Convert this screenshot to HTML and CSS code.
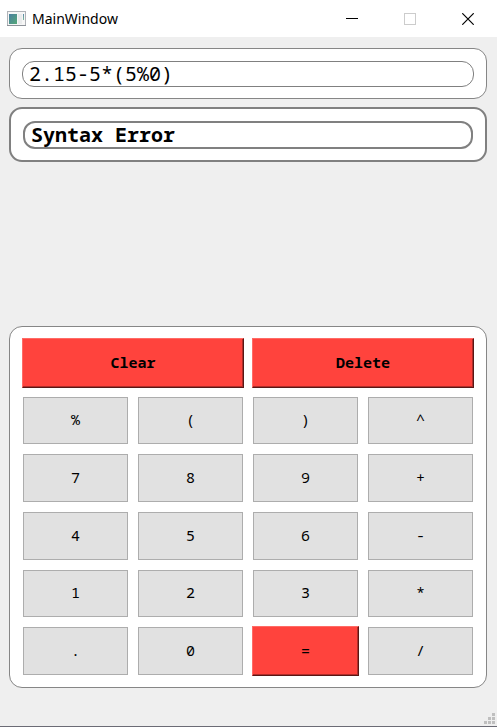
FILE: index.html
```html
<!DOCTYPE html>
<html lang="en">
<head>
<meta charset="utf-8">
<meta name="viewport" content="width=device-width, initial-scale=1">
<title>MainWindow</title>
<link rel="stylesheet" href="styles.css">
</head>
<body>
<header class="titlebar">
  <svg class="app-icon" width="19" height="16" viewBox="0 0 19 16" aria-hidden="true">
    <defs>
      <linearGradient id="pane" x1="0" y1="0" x2="1" y2="1">
        <stop offset="0" stop-color="#4a7fa0"/><stop offset="1" stop-color="#55a878"/>
      </linearGradient>
      <linearGradient id="strip" x1="0" y1="0" x2="0" y2="1">
        <stop offset="0" stop-color="#5b86a8"/><stop offset="1" stop-color="#7dbb98"/>
      </linearGradient>
    </defs>
    <rect x="0.5" y="0.5" width="18" height="14" fill="#f6f6f6" stroke="#b0b3b8"/>
    <path d="M0 14.5H19" stroke="#8d9299"/>
    <rect x="2" y="3" width="8" height="10" fill="url(#pane)"/>
    <rect x="11" y="3" width="4" height="10" fill="#e9ebec"/>
    <rect x="16" y="3" width="1" height="6" fill="url(#strip)"/>
  </svg>
  <h1 class="title">MainWindow</h1>
  <button class="window-button" type="button" aria-label="Minimize">
    <svg width="12" height="12" viewBox="0 0 12 12"><path d="M0 5.5H12" stroke="#000"/></svg>
  </button>
  <button class="window-button" type="button" aria-label="Maximize" disabled>
    <svg width="12" height="12" viewBox="0 0 12 12"><rect x="0.5" y="0.5" width="11" height="11" fill="none" stroke="#ccc"/></svg>
  </button>
  <button class="window-button" type="button" aria-label="Close">
    <svg width="12" height="12" viewBox="0 0 12 12"><path d="M0.3 0.3L11.7 11.7M11.7 0.3L0.3 11.7" stroke="#000" stroke-width="1.2"/></svg>
  </button>
</header>
<main class="calculator">
  <section class="panel">
    <input class="field" type="text" aria-label="Expression" value="2.15-5*(5%0)">
  </section>
  <section class="panel panel-result">
    <input class="field field-result" type="text" aria-label="Result" value="Syntax Error" readonly>
  </section>
  <section class="keypad" aria-label="Keypad">
    <button class="key key-red key-wide" type="button">Clear</button>
    <button class="key key-red key-wide" type="button">Delete</button>
    <button class="key" type="button">%</button>
    <button class="key" type="button">(</button>
    <button class="key" type="button">)</button>
    <button class="key" type="button">^</button>
    <button class="key" type="button">7</button>
    <button class="key" type="button">8</button>
    <button class="key" type="button">9</button>
    <button class="key" type="button">+</button>
    <button class="key" type="button">4</button>
    <button class="key" type="button">5</button>
    <button class="key" type="button">6</button>
    <button class="key" type="button">-</button>
    <button class="key" type="button">1</button>
    <button class="key" type="button">2</button>
    <button class="key" type="button">3</button>
    <button class="key" type="button">*</button>
    <button class="key" type="button">.</button>
    <button class="key" type="button">0</button>
    <button class="key key-red" type="button">=</button>
    <button class="key" type="button">/</button>
  </section>
</main>
<footer class="statusbar">
  <svg width="11" height="11" viewBox="0 0 11 11" fill="#bfbfbf" aria-hidden="true">
    <path d="M8 0h3v3h-3zM4 4h3v3h-3zM8 4h3v3h-3zM0 8h3v3h-3zM4 8h3v3h-3zM8 8h3v3h-3z"/>
  </svg>
</footer>
</body>
</html>
```
FILE: styles.css
```css
* {
  box-sizing: border-box;
}

body {
  margin: 0;
  min-height: 100vh;
  display: flex;
  flex-direction: column;
  background: #efefef;
  border-bottom: 1px solid #6b6b75;
  color: #000;
  font-family: "Noto Sans Mono", "DejaVu Sans Mono", monospace;
}

.titlebar {
  display: flex;
  align-items: center;
  height: 37px;
  padding-left: 7px;
  background: #fff;
}

.title {
  flex: 1;
  margin: 0 0 0 6px;
  font: 400 14px/20px "Noto Sans", sans-serif;
}

.window-button {
  display: flex;
  align-items: center;
  justify-content: center;
  width: 58px;
  height: 36px;
  padding: 0;
  border: 0;
  background: transparent;
}

.calculator {
  flex: 1;
  display: flex;
  flex-direction: column;
  gap: 8px;
  padding: 11px 10px 0 9px;
}

.panel {
  display: flex;
  padding: 12px 12px 11px;
  border: 1px solid #868686;
  border-radius: 13px;
  background: #fff;
}

.panel-result {
  border-width: 2px;
  border-color: #808080;
}

.field {
  width: 100%;
  height: 26px;
  padding: 0 7px 2px 6px;
  border: 1px solid #808080;
  border-radius: 12px;
  outline: 0;
  background: #fff;
  color: #000;
  font-family: inherit;
  font-size: 20px;
}

.field-result {
  height: 28px;
  border-width: 2px;
  font-weight: 700;
}

.keypad {
  display: grid;
  grid-template-columns: repeat(4, 1fr);
  grid-auto-rows: 1fr;
  gap: 8px;
  min-height: 362px;
  margin-top: auto;
  padding: 11px 12px;
  border: 1px solid #868686;
  border-radius: 13px;
  background: #fff;
}

.key {
  margin: 1px;
  padding: 0 0 2px;
  border: 1px solid #adadad;
  background: #e1e1e1;
  color: #000;
  font-family: inherit;
  font-size: 15px;
}

.key-red {
  margin: 0;
  border-color: #ff6b66 #5a1715 #5a1715 #ff6b66;
  background: #ff433d;
  box-shadow: inset -1px -1px #b02e2a;
}

.key-wide {
  grid-column: span 2;
  font-weight: 700;
}

.statusbar {
  display: flex;
  align-items: flex-end;
  justify-content: flex-end;
  height: 38px;
  padding: 0 2px 2px;
}
```
